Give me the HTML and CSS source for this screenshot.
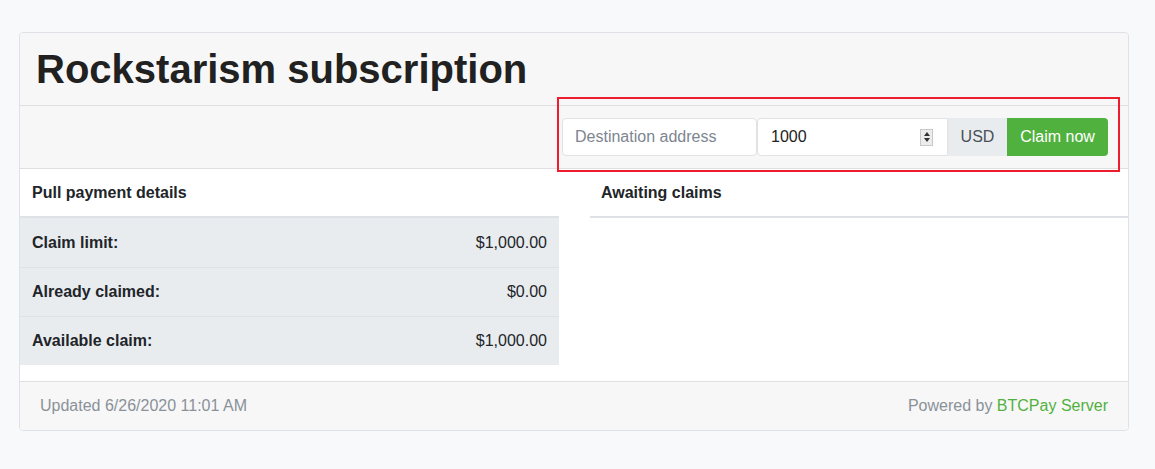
FILE: index.html
```html
<!DOCTYPE html>
<html>
<head>
<meta charset="utf-8">
<link rel="stylesheet" href="styles.css">
</head>
<body>
<div class="card">
  <div class="card-header">
    <h1 class="title">Rockstarism subscription</h1>
  </div>
  <div class="claim-bar">
    <form class="claim-form">
      <input class="field dest" type="text" placeholder="Destination address">
      <div class="field amount">
        <span class="amount-value">1000</span>
        <span class="spinner"><span class="spin-up"></span><span class="spin-down"></span></span>
      </div>
      <span class="addon">USD</span>
      <button class="btn" type="button">Claim now</button>
    </form>
    <div class="highlight"></div>
  </div>
  <div class="card-body">
    <div class="details">
      <div class="thead">Pull payment details</div>
      <div class="row"><span class="label">Claim limit:</span><span class="value">$1,000.00</span></div>
      <div class="row"><span class="label">Already claimed:</span><span class="value">$0.00</span></div>
      <div class="row"><span class="label">Available claim:</span><span class="value">$1,000.00</span></div>
    </div>
    <div class="claims">
      <div class="thead">Awaiting claims</div>
    </div>
  </div>
  <div class="card-footer">
    <span class="updated">Updated 6/26/2020 11:01 AM</span>
    <span class="powered">Powered by <a href="#" class="brand">BTCPay Server</a></span>
  </div>
</div>
</body>
</html>
```

FILE: styles.css
```css
* { box-sizing: border-box; }
html, body { margin: 0; }
body {
  background: #f8f9fa;
  font-family: "Liberation Sans", Arial, sans-serif;
  color: #212529;
  font-size: 16px;
  padding: 32px 26px 0 19px;
}
.card {
  width: 1110px;
  border: 1px solid #dee2e6;
  border-radius: 4px;
  background: #fff;
}
.card-header {
  background: #f7f7f7;
  padding: 12px 16px;
  border-bottom: 1px solid #dfdfdf;
  border-radius: 4px 4px 0 0;
}
.title {
  margin: 0;
  font-size: 40px;
  line-height: 48px;
  font-weight: 700;
  color: #212121;
}
.claim-bar {
  position: relative;
  background: #f7f7f7;
  border-bottom: 1px solid #dfdfdf;
  padding: 12px 20px 12px 0;
  display: flex;
  justify-content: flex-end;
}
.claim-form {
  display: flex;
  height: 38px;
}
.field {
  height: 38px;
  border: 1px solid #e2e2e2;
  background: #fff;
  font-family: inherit;
  font-size: 16px;
  color: #495057;
}
.dest {
  width: 195px;
  border-radius: 4px;
  padding: 0 12px;
  outline: none;
}
.dest::placeholder { color: #7d8590; }
.amount {
  width: 191px;
  border-radius: 4px 0 0 4px;
  margin-left: 0;
  display: flex;
  align-items: center;
  justify-content: space-between;
  padding: 0 14px 0 13px;
  color: #222;
}
.spinner {
  width: 13px;
  height: 17px;
  border: 1px solid #c9c9c9;
  background: #ececec;
  display: flex;
  flex-direction: column;
  justify-content: space-around;
  align-items: center;
  padding: 2px 0;
}
.spin-up, .spin-down {
  width: 0; height: 0;
  border-left: 3px solid transparent;
  border-right: 3px solid transparent;
}
.spin-up { border-bottom: 4px solid #333; }
.spin-down { border-top: 4px solid #333; }
.addon {
  width: 59px;
  height: 38px;
  background: #e9ecef;
  color: #495057;
  display: flex;
  align-items: center;
  justify-content: center;
}
.btn {
  width: 101px;
  height: 38px;
  border: none;
  background: #51b13e;
  color: #fff;
  font-family: inherit;
  font-size: 16px;
  border-radius: 0 4px 4px 0;
  padding: 0;
}
.highlight {
  position: absolute;
  left: 537px;
  top: -9px;
  width: 563px;
  height: 75px;
  border: 2px solid #ee1c2f;
  pointer-events: none;
}
.card-body {
  display: grid;
  grid-template-columns: 539px 538px;
  column-gap: 31px;
  align-items: start;
  padding-bottom: 16px;
}
.thead {
  height: 49px;
  display: flex;
  align-items: center;
  padding: 0 12px;
  font-weight: 700;
  border-bottom: 2px solid #dee2e6;
}
.claims .thead { padding-left: 11px; }
.row {
  height: 49px;
  display: flex;
  align-items: center;
  justify-content: space-between;
  padding: 0 12px;
  background: #e9ecef;
  border-top: 1px solid #dee2e6;
}
.thead + .row { border-top: none; }
.label { font-weight: 700; }
.card-footer {
  background: #f7f7f7;
  border-top: 1px solid #dfdfdf;
  border-radius: 0 0 4px 4px;
  padding: 12px 20px 12px 20px;
  display: flex;
  justify-content: space-between;
  line-height: 24px;
  color: #8a9199;
}
.brand { color: #51b13e; text-decoration: none; }
```
